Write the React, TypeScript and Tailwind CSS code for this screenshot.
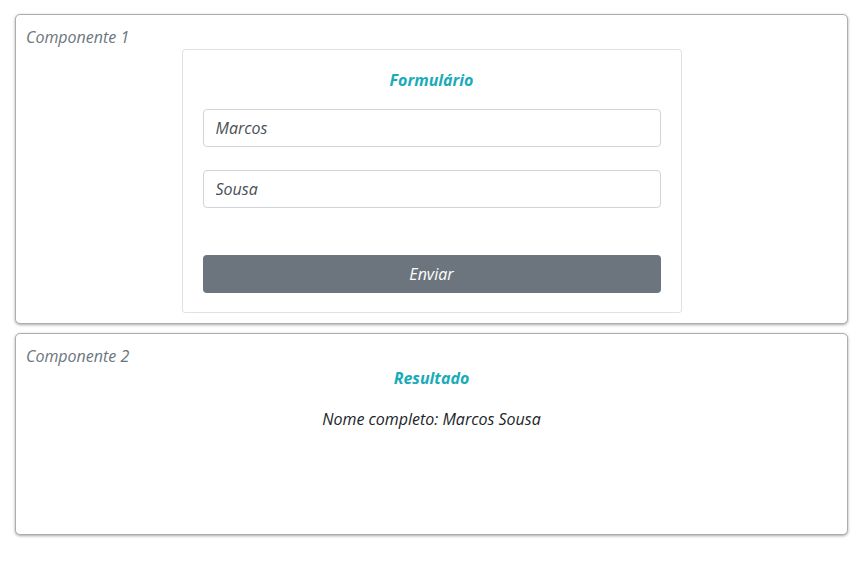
import React, { useState } from 'react';

const Card: React.FC<{ title: string; className?: string; children: React.ReactNode }> = ({ title, className = '', children }) => (
    <div className={`rounded-[5px] border border-[#adadad] bg-white p-[10px] shadow-[0_1px_3px_rgba(0,0,0,0.35)] ${className}`}>
        <p className="text-[#6c757d] leading-6">{title}</p>
        {children}
    </div>
);

export default function App() {
    const [nome, setNome] = useState('Marcos');
    const [sobrenome, setSobrenome] = useState('Sousa');

    return (
        <div
            className="min-h-[561px] bg-white px-[15px] pt-[14px] italic text-[16px] text-[#212529]"
            style={{ fontFamily: '"Open Sans", "Noto Sans", sans-serif' }}
        >
            <div className="flex w-[833px] flex-col gap-[9px]">
                <Card title="Componente 1">
                    <div className="mx-auto w-[500px] rounded-[3px] border border-[#dee2e6] px-[20px] pt-[18px] pb-[19px]">
                        <h2 className="text-center font-bold leading-6 text-[#1aabb8]">Formulário</h2>
                        <input
                            className="mt-[17px] block h-[38px] w-full rounded-[4px] border border-[#ced4da] px-[12px] italic text-[#495057] outline-none"
                            value={nome}
                            onChange={(e) => setNome(e.target.value)}
                        />
                        <input
                            className="mt-[23px] block h-[38px] w-full rounded-[4px] border border-[#ced4da] px-[12px] italic text-[#495057] outline-none"
                            value={sobrenome}
                            onChange={(e) => setSobrenome(e.target.value)}
                        />
                        <button className="mt-[47px] block h-[38px] w-full rounded-[4px] bg-[#6c757d] italic text-white">
                            Enviar
                        </button>
                    </div>
                </Card>
                <Card title="Componente 2" className="min-h-[202px]">
                    <h2 className="text-center font-bold leading-5 text-[#1aabb8]">Resultado</h2>
                    <p className="mt-[19px] text-center leading-6">Nome completo: {nome} {sobrenome}</p>
                </Card>
            </div>
        </div>
    );
}
